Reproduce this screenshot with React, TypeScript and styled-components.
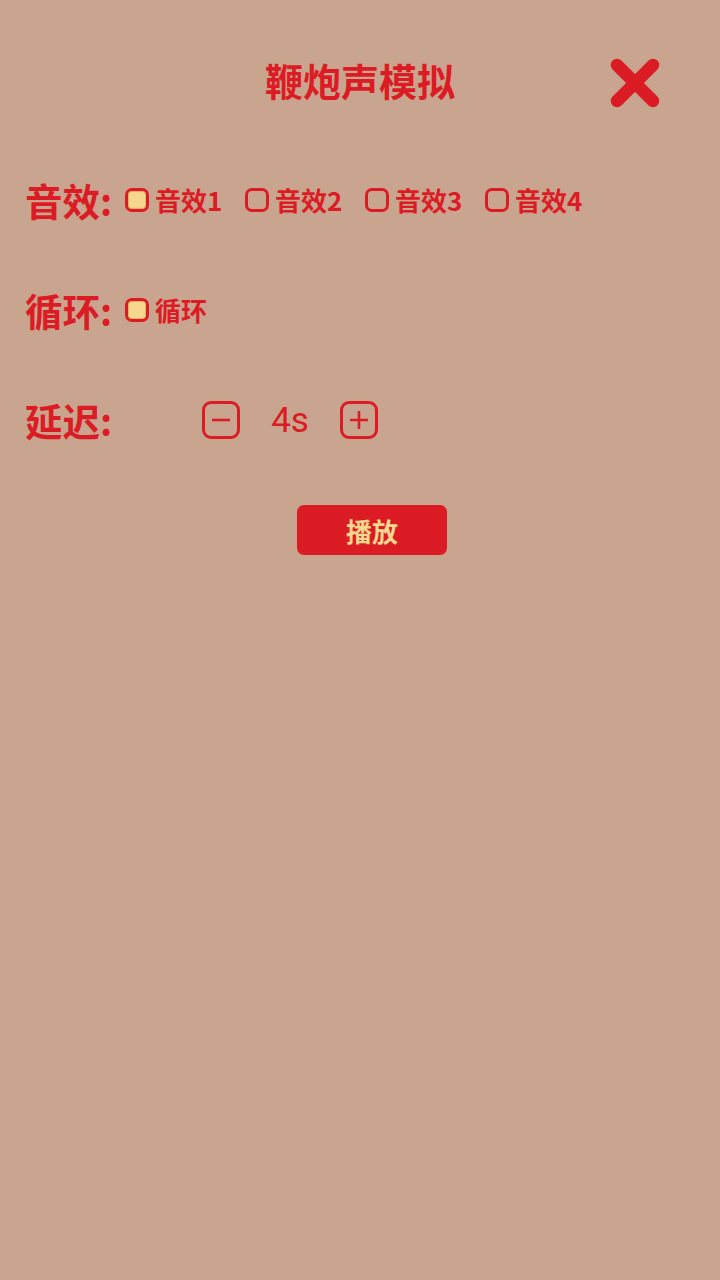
import React, { useState } from "react";
import styled, { createGlobalStyle } from "styled-components";

const RED = "#dc1c24";
const BG = "#c9a48e";
const CREAM = "#f5d88e";

const GlobalStyle = createGlobalStyle`
  html, body {
    margin: 0;
    padding: 0;
    background: ${BG};
  }
  body {
    font-family: "Noto Sans CJK SC", "Noto Sans", sans-serif;
  }
`;

const Page = styled.div`
  min-height: 1280px;
  background: ${BG};
  padding: 0 25px;
  box-sizing: border-box;
  color: ${RED};
`;

const Header = styled.div`
  display: grid;
  grid-template-columns: 1fr auto 1fr;
  align-items: center;
  height: 50px;
  padding-top: 58px;
  margin-bottom: 37px;
`;

const Title = styled.h1`
  grid-column: 2;
  margin: 0 0 6px;
  font-size: 38px;
  font-weight: 700;
  line-height: 1;
  letter-spacing: 0;
`;

const CloseButton = styled.button`
  grid-column: 3;
  justify-self: end;
  margin-right: 35px;
  width: 50px;
  height: 50px;
  padding: 0;
  border: 0;
  background: none;
  cursor: pointer;
  svg {
    display: block;
  }
`;

const Row = styled.div`
  display: flex;
  align-items: center;
  height: 110px;
`;

const Label = styled.span`
  width: 100px;
  font-size: 37.5px;
  font-weight: 700;
  line-height: 1;
  white-space: nowrap;
`;

const Options = styled.div`
  display: flex;
  align-items: center;
`;

const Option = styled.label`
  display: flex;
  align-items: center;
  gap: 6px;
  width: 120px;
  font-size: 26px;
  font-weight: 700;
  line-height: 1;
  cursor: pointer;
`;

const Box = styled.span<{ $checked: boolean }>`
  flex: none;
  width: 24px;
  height: 24px;
  box-sizing: border-box;
  border: 3px solid ${RED};
  border-radius: 7px;
  background: ${(p) => (p.$checked ? CREAM : "transparent")};
  box-shadow: ${(p) => (p.$checked ? `inset 0 0 0 1px #e8b26a` : "none")};
`;

const Stepper = styled.div`
  display: flex;
  align-items: center;
  gap: 30px;
  margin-left: 77px;
`;

const StepButton = styled.button`
  width: 38px;
  height: 38px;
  padding: 0;
  box-sizing: border-box;
  border: 3px solid ${RED};
  border-radius: 9px;
  background: transparent;
  display: flex;
  align-items: center;
  justify-content: center;
  cursor: pointer;
`;

const Value = styled.span`
  font-family: Roboto, "Liberation Sans", sans-serif;
  font-size: 35px;
  font-weight: 400;
  line-height: 1;
  width: 40px;
  text-align: center;
`;

const PlayRow = styled.div`
  display: flex;
  margin-top: 30px;
  padding-left: 272px;
`;

const PlayButton = styled.button`
  width: 150px;
  height: 50px;
  border: 0;
  border-radius: 7px;
  background: ${RED};
  color: ${CREAM};
  font-family: "Noto Sans CJK SC", sans-serif;
  font-size: 26px;
  font-weight: 700;
  cursor: pointer;
`;

const effects = ["音效1", "音效2", "音效3", "音效4"];

export default function App() {
  const [effect, setEffect] = useState(0);
  const [loop, setLoop] = useState(true);
  const [delay, setDelay] = useState(4);

  return (
    <Page>
      <GlobalStyle />
      <Header>
        <Title>鞭炮声模拟</Title>
        <CloseButton aria-label="关闭">
          <svg width="50" height="50" viewBox="0 0 50 50">
            <path
              d="M7 7 L43 43 M43 7 L7 43"
              stroke={RED}
              strokeWidth="12.5"
              strokeLinecap="round"
              fill="none"
            />
          </svg>
        </CloseButton>
      </Header>

      <Row>
        <Label>音效:</Label>
        <Options>
          {effects.map((name, i) => (
            <Option key={name} onClick={() => setEffect(i)}>
              <Box $checked={effect === i} />
              {name}
            </Option>
          ))}
        </Options>
      </Row>

      <Row>
        <Label>循环:</Label>
        <Options>
          <Option onClick={() => setLoop(!loop)}>
            <Box $checked={loop} />
            循环
          </Option>
        </Options>
      </Row>

      <Row>
        <Label>延迟:</Label>
        <Stepper>
          <StepButton onClick={() => setDelay(Math.max(0, delay - 1))}>
            <svg width="22" height="22" viewBox="0 0 22 22">
              <path d="M2 11 H20" stroke={RED} strokeWidth="2.6" />
            </svg>
          </StepButton>
          <Value>{delay}s</Value>
          <StepButton onClick={() => setDelay(delay + 1)}>
            <svg width="22" height="22" viewBox="0 0 22 22">
              <path d="M2 11 H20 M11 2 V20" stroke={RED} strokeWidth="2.6" />
            </svg>
          </StepButton>
        </Stepper>
      </Row>

      <PlayRow>
        <PlayButton>播放</PlayButton>
      </PlayRow>
    </Page>
  );
}
